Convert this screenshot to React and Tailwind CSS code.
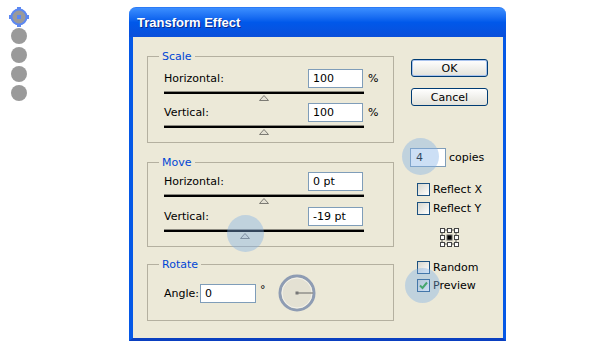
import React from "react";

const ui = "font-['DejaVu_Sans',sans-serif] text-[11px] leading-[13px] text-black";

function Dot({ active }) {
  if (active) {
    return (
      <svg width="20" height="20" viewBox="0 0 20 20" className="-mx-[2px] -my-[2px]">
        <circle cx="10" cy="10" r="8" fill="#9A9A9A" />
        <circle cx="10" cy="10" r="7.5" fill="none" stroke="#5C88F2" strokeWidth="2" />
        <rect x="8" y="0" width="4" height="3" fill="#5C88F2" />
        <rect x="8" y="17" width="4" height="3" fill="#5C88F2" />
        <rect x="0" y="8" width="3" height="4" fill="#5C88F2" />
        <rect x="17" y="8" width="3" height="4" fill="#5C88F2" />
        <rect x="8" y="8" width="4" height="4" fill="#5C88F2" />
      </svg>
    );
  }
  return <div className="w-[16px] h-[16px] rounded-full bg-[#9A9A9A]" />;
}

function Field({ value, wide }) {
  return (
    <div className={`${wide ? "w-[56px]" : "w-[55px]"} h-[19px] border border-[#7F9DB9] bg-white px-[4px] flex items-center`}>
      {value}
    </div>
  );
}

function Slider({ thumb }) {
  return (
    <div className="w-[200px]">
      <div className="h-[3px] border-t border-[#8C8A80] bg-black" />
      <svg width="10" height="6" viewBox="0 0 10 6" className={`mt-[1px] ${thumb}`}>
        <polygon points="5,0.5 9.5,5.5 0.5,5.5" fill="#E4E1D4" stroke="#7C7B74" strokeWidth="1" />
      </svg>
    </div>
  );
}

function Row({ label, value, unit, thumb, top }) {
  return (
    <div className={top}>
      <div className="flex items-center pr-[10px]">
        <span className="flex-1">{label}</span>
        <Field value={value} />
        <span className="w-[20px] pl-[5px]">{unit}</span>
      </div>
      <div className="mt-[3px]">
        <Slider thumb={thumb} />
      </div>
    </div>
  );
}

function Group({ title, children, className }) {
  return (
    <fieldset className={`border border-[#B4B0A0] pl-[16px] ${className}`}>
      <legend className="-ml-[5px] px-[3px] text-[#0046D5] text-[11px]">{title}</legend>
      {children}
    </fieldset>
  );
}

function Check({ label, checked }) {
  return (
    <div className="flex items-center gap-[3px] ml-[6px]">
      <span className="w-[13px] h-[13px] border border-[#1C5180] bg-linear-to-br from-[#D6D6CE] to-white flex items-center justify-center">
        {checked && (
          <svg width="9" height="9" viewBox="0 0 9 9">
            <path d="M1 4.5 L3.5 7 L8 1.5" fill="none" stroke="#21A121" strokeWidth="2" />
          </svg>
        )}
      </span>
      <span>{label}</span>
    </div>
  );
}

function Locator() {
  const sq = [[0, 0], [7, 0], [14, 0], [0, 7], [14, 7], [0, 14], [7, 14], [14, 14]];
  return (
    <svg width="19" height="19" viewBox="0 0 19 19">
      <path d="M4 2h3M11 2h3M4 16h3M11 16h3M2 4v3M2 11v3M16 4v3M16 11v3" stroke="#555" strokeWidth="1" />
      {sq.map(([x, y], i) => (
        <rect key={i} x={x + 0.5} y={y + 0.5} width="4" height="4" fill="#fff" stroke="#444" strokeWidth="1" />
      ))}
      <rect x="7" y="7" width="5" height="5" fill="#000" stroke="#666" strokeWidth="1" />
    </svg>
  );
}

function Dial() {
  return (
    <svg width="38" height="38" viewBox="0 0 38 38">
      <circle cx="19" cy="19" r="17" fill="#E4E1D3" stroke="#8E9CB3" strokeWidth="3" />
      <circle cx="19" cy="19" r="15" fill="none" stroke="#F4F2EA" strokeWidth="1" />
      <line x1="19" y1="19" x2="35" y2="19" stroke="#666" strokeWidth="1" />
      <rect x="17.5" y="17.5" width="3" height="3" fill="#777" />
    </svg>
  );
}

export default function App() {
  return (
    <div className={`relative w-[600px] h-[350px] bg-white flex ${ui}`}>
      {/* tool dots */}
      <div className="pl-[11px] pt-[9px] flex flex-col gap-[3px]">
        <Dot active />
        <Dot />
        <Dot />
        <Dot />
        <Dot />
      </div>

      {/* dialog window */}
      <div className="ml-[102px] mt-[7px] w-[377px] h-[334px] flex flex-col">
        <div className="h-[30px] rounded-t-[7px] bg-linear-to-b from-[#3B8EFF] via-[#0058EA] to-[#0A4FDA] flex items-center pl-[8px] border-t border-[#2C7BF5]">
          <span className="font-['Liberation_Sans',sans-serif] font-bold text-[13px] text-white [text-shadow:1px_1px_0_#0A2C8C]">
            Transform Effect
          </span>
        </div>
        <div className="flex-1 flex border-l-[4px] border-r-[3px] border-b-[3px] border-l-[#0558E6] border-r-[#0558E6] border-b-[#0A3FC0] bg-[#ECE9D8]">
          {/* left column */}
          <div className="w-[261px] pl-[14px] pt-[13px] flex flex-col">
            <Group title="Scale" className="h-[93px]">
              <Row label="Horizontal:" value="100" unit="%" thumb="ml-[95px]" top="mt-[6px]" />
              <Row label="Vertical:" value="100" unit="%" thumb="ml-[95px]" top="mt-[2px]" />
            </Group>
            <Group title="Move" className="h-[91px] mt-[13px]">
              <Row label="Horizontal:" value="0 pt" thumb="ml-[95px]" top="mt-[3px]" />
              <Row label="Vertical:" value="-19 pt" thumb="ml-[76px]" top="mt-[3px]" />
            </Group>
            <Group title="Rotate" className="h-[63px] mt-[11px]">
              <div className="flex items-center mt-[3px]">
                <span className="mr-[1px]">Angle:</span>
                <Field value="0" wide />
                <span className="ml-[4px] -mt-[8px]">°</span>
                <div className="ml-[12px]">
                  <Dial />
                </div>
              </div>
            </Group>
          </div>

          {/* right column */}
          <div className="flex-1 pl-[17px] pt-[22px] flex flex-col">
            <button className="w-[77px] h-[18px] rounded-[3px] border border-[#003C74] bg-linear-to-b from-white to-[#E3E2DA] shadow-[inset_0_0_0_1px_#A9C3EE] leading-none">
              OK
            </button>
            <button className="mt-[11px] w-[77px] h-[18px] rounded-[3px] border border-[#003C74] bg-linear-to-b from-white to-[#E3E2DA] leading-none">
              Cancel
            </button>
            <div className="mt-[42px] -ml-[1px] flex items-center">
              <div className="w-[36px] h-[19px] border border-[#7F9DB9] bg-white px-[5px] flex items-center">4</div>
              <span className="ml-[3px]">copies</span>
            </div>
            <div className="mt-[16px] flex flex-col gap-[6px]">
              <Check label="Reflect X" />
              <Check label="Reflect Y" />
            </div>
            <div className="mt-[13px] ml-[29px]">
              <Locator />
            </div>
            <div className="mt-[14px] flex flex-col gap-[5px]">
              <Check label="Random" />
              <Check label="Preview" checked />
            </div>
          </div>
        </div>
      </div>

      {/* tutorial highlights */}
      <div className="absolute left-[227px] top-[215px] w-[37px] h-[37px] rounded-full bg-[#7FB0E6]/40" />
      <div className="absolute left-[402px] top-[138px] w-[37px] h-[37px] rounded-full bg-[#7FB0E6]/40" />
      <div className="absolute left-[405px] top-[268px] w-[35px] h-[35px] rounded-full bg-[#7FB0E6]/40" />
    </div>
  );
}
